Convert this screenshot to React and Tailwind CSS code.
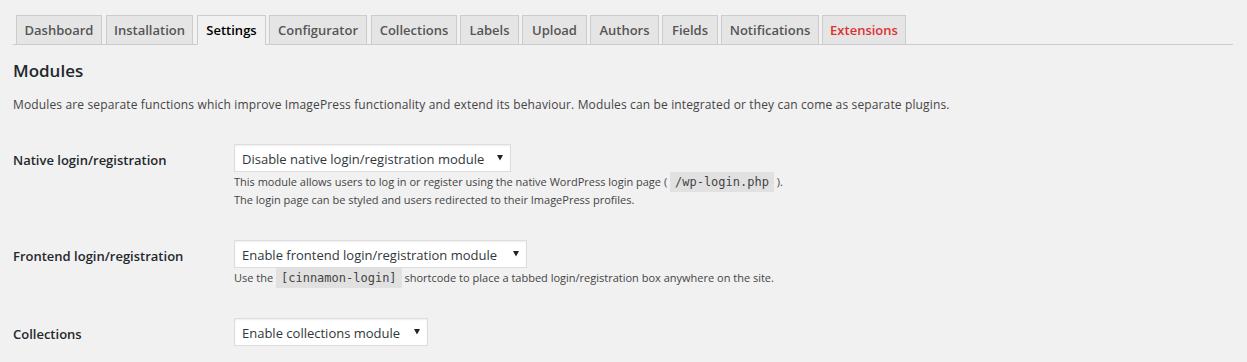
import React from "react";

const tabs = [
  { label: "Dashboard", w: "w-[86px]", ml: "ml-[3px]" },
  { label: "Installation", w: "w-[87px]", ml: "ml-[4px]" },
  { label: "Settings", w: "w-[69px]", ml: "ml-[4px]", active: true },
  { label: "Configurator", w: "w-[98px]", ml: "ml-[3px]" },
  { label: "Collections", w: "w-[86px]", ml: "ml-[4px]" },
  { label: "Labels", w: "w-[59px]", ml: "ml-[3px]" },
  { label: "Upload", w: "w-[65px]", ml: "ml-[3px]" },
  { label: "Authors", w: "w-[69px]", ml: "ml-[3px]" },
  { label: "Fields", w: "w-[56px]", ml: "ml-[3px]" },
  { label: "Notifications", w: "w-[98px]", ml: "ml-[3px]" },
  { label: "Extensions", w: "w-[84px]", ml: "ml-[3px]", red: true },
];

function Tab({ t }) {
  const base =
    "flex justify-center shrink-0 border-t border-x border-[#cccccc] text-[13px] font-semibold leading-[28px] " +
    t.w +
    " " +
    t.ml;
  if (t.active) {
    return <div className={base + " h-[30px] -mb-px bg-[#f1f1f1] text-[#000000]"}>{t.label}</div>;
  }
  return (
    <div className={base + " h-[29px] bg-[#e5e5e5] " + (t.red ? "text-[#dc3232]" : "text-[#555555]")}>
      {t.label}
    </div>
  );
}

function Select({ text, w }) {
  return (
    <div
      className={
        "flex h-[28px] box-border items-start justify-between border border-[#dddddd] bg-white pl-[7px] pr-[7px] pt-[3px] text-[13px] leading-[23px] text-[#32373c] shadow-[inset_0_1px_2px_rgba(0,0,0,0.07)] " +
        w
      }
    >
      <span className="whitespace-nowrap">{text}</span>
      <svg width="6" height="6" viewBox="0 0 6 6" className="mt-[7px] shrink-0">
        <polygon points="0,0 6,0 3,5.5" fill="#222222" />
      </svg>
    </div>
  );
}

function Code({ children }) {
  return (
    <code className="bg-[#e1e1e1] px-[5px] pt-[3px] pb-[3px] text-[12px] leading-[14px] text-[#444444] [font-family:'DejaVu_Sans_Mono',monospace]">
      {children}
    </code>
  );
}

function Row({ label, children }) {
  return (
    <div className="flex">
      <div className="w-[221px] shrink-0 pt-[22px] text-[13px] font-semibold leading-[18px] text-[#23282d]">
        {label}
      </div>
      <div className="pt-[15px] pb-[16px]">{children}</div>
    </div>
  );
}

export default function App() {
  return (
    <div className="h-[362px] overflow-hidden bg-[#f1f1f1] pl-[13px] pr-[14px] [font-family:'Open_Sans',sans-serif]">
      <div className="flex items-end border-b border-[#cccccc] pt-[15px]">
        {tabs.map((t) => (
          <Tab key={t.label} t={t} />
        ))}
      </div>

      <h2 className="mt-[14px] text-[17px] font-semibold leading-[23px] text-[#23282d]">Modules</h2>
      <p className="mt-[14px] text-[12px] leading-[18px] tracking-[0.14px] text-[#444444]">
        Modules are separate functions which improve ImagePress functionality and extend its behaviour. Modules can be
        integrated or they can come as separate plugins.
      </p>

      <div className="mt-[15px]">
        <Row label="Native login/registration">
          <Select text="Disable native login/registration module" w="w-[277px]" />
          <p className="mt-px text-[11px] leading-[18px] text-[#444444]">
            This module allows users to log in or register using the native WordPress login page ({" "}
            <Code>/wp-login.php</Code> ).
            <br />
            The login page can be styled and users redirected to their ImagePress profiles.
          </p>
        </Row>
        <Row label="Frontend login/registration">
          <Select text="Enable frontend login/registration module" w="w-[293px]" />
          <p className="mt-px text-[11px] leading-[18px] text-[#444444]">
            Use the <Code>[cinnamon-login]</Code> shortcode to place a tabbed login/registration box anywhere on the
            site.
          </p>
        </Row>
        <Row label="Collections">
          <Select text="Enable collections module" w="w-[194px]" />
        </Row>
      </div>
    </div>
  );
}
